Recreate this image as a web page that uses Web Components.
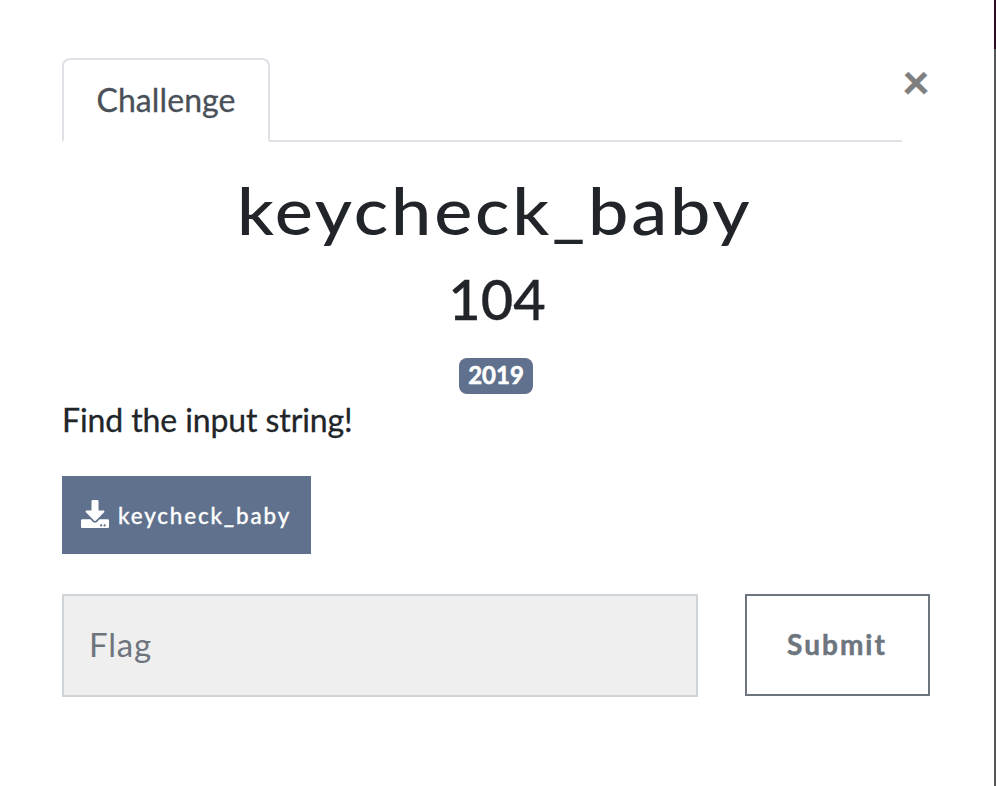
<!DOCTYPE html>
<html lang="en">
<head>
<meta charset="utf-8">
<title>Challenge</title>
<style>
body { margin: 0; background: #fff; color: #212529; font-family: Lato, "Liberation Sans", sans-serif; -webkit-text-stroke: .3px currentColor; }
</style>
</head>
<body>
<challenge-modal>
  <challenge-tab slot="tab">Challenge</challenge-tab>
  <challenge-heading slot="head" points="104">keycheck_baby</challenge-heading>
  <challenge-tag slot="head">2019</challenge-tag>
  <span slot="description">Find the input string!</span>
  <file-button slot="files">keycheck_baby</file-button>
  <flag-form slot="form" placeholder="Flag" action="Submit"></flag-form>
</challenge-modal>
<script>
function define(name, markup, init) {
  const template = document.createElement('template');
  template.innerHTML = markup;
  customElements.define(name, class extends HTMLElement {
    constructor() {
      super();
      this.attachShadow({ mode: 'open' }).append(template.content.cloneNode(true));
    }
    connectedCallback() { if (init) init(this, this.shadowRoot); }
  });
}

define('challenge-modal', `
<style>
  :host { display: grid; grid-template-columns: 1fr 2px; height: 786px; overflow: hidden; }
  main { padding: 58px 64px 0 62px; display: flex; flex-direction: column; }
  .edge { background: linear-gradient(#2d0922 0 49px, #555859 49px 80px, #555 80px); }
  header { display: flex; height: 84px; }
  nav { width: 840px; flex: none; box-sizing: border-box; border-bottom: 2px solid #dee2e6; display: flex; }
  button { all: unset; width: 28px; margin-top: -1px; font-size: 48px; font-weight: 900; line-height: 48px; color: #7f7f7f; display: flex; justify-content: center; }
  .head { display: flex; flex-direction: column; align-items: center; width: 868px; height: 252px; }
  .description { box-sizing: border-box; font-size: 32px; line-height: 48px; padding-top: 2px; height: 82px; letter-spacing: -.1px; }
  .files { height: 118px; display: flex; align-items: flex-start; }
</style>
<main>
  <header><nav><slot name="tab"></slot></nav><button aria-label="Close">×</button></header>
  <div class="head"><slot name="head"></slot></div>
  <div class="description"><slot name="description"></slot></div>
  <div class="files"><slot name="files"></slot></div>
  <slot name="form"></slot>
</main>
<div class="edge"></div>`);

define('challenge-tab', `
<style>
  :host { display: block; box-sizing: border-box; width: 208px; height: 84px; padding: 16px 0; text-align: center;
    font-size: 32px; line-height: 48px; letter-spacing: .1px; color: #495057; background: #fff;
    border: 2px solid #dee2e6; border-bottom-color: #fff; border-radius: 8px 8px 0 0; }
</style><slot></slot>`);

define('challenge-heading', `
<style>
  :host { display: block; text-align: center; padding-top: 29px; height: 187px; font-weight: 500; }
  h2, h3 { margin: 0; font-weight: inherit; }
  h2 { font-size: 65px; line-height: 78px; letter-spacing: 2.6px; transform: translateX(-1.5px) scaleX(1.105); -webkit-text-stroke-width: 0; }
  h3 { font-size: 56px; line-height: 67px; margin-top: 16px; padding-left: 2px; -webkit-text-stroke-width: .3px; }
</style><h2><slot></slot></h2><h3></h3>`,
(el, root) => { root.querySelector('h3').textContent = el.getAttribute('points'); });

define('challenge-tag', `
<style>
  :host { display: block; width: 74px; height: 36px; border-radius: 8px; background: #60718d; color: #fff;
    font-size: 24px; font-weight: 700; line-height: 34px; text-align: center; -webkit-text-stroke-width: .6px; }
</style><slot></slot>`);

define('file-button', `
<style>
  :host { display: flex; align-items: center; box-sizing: border-box; width: 249px; height: 78px; padding-left: 19px; gap: 9px;
    background: #60718d; color: #fff; font-size: 22.4px; line-height: 34px; font-weight: 500; letter-spacing: 1.85px; }
  svg { width: 28px; height: 28px; flex: none; margin-top: -3px; }
  span { white-space: nowrap; padding-top: 2px; }
</style>
<svg viewBox="0 0 512 512" fill="currentColor"><path d="M216 0h80c13.300 0 24 10.700 24 24v168h87.700c17.800 0 26.700 21.500 14.100 34.100L269.700 378.300c-7.500 7.500-19.800 7.500-27.300 0L90.100 226.100c-12.600-12.600-3.700-34.100 14.100-34.100H192V24c0-13.300 10.700-24 24-24zm296 376v112c0 13.300-10.700 24-24 24H24c-13.300 0-24-10.700-24-24V376c0-13.300 10.700-24 24-24h146.700l49 49c20.100 20.100 52.500 20.100 72.600 0l49-49H488c13.300 0 24 10.700 24 24zm-124 88c0-11-9-20-20-20s-20 9-20 20 9 20 20 20 20-9 20-20zm64 0c0-11-9-20-20-20s-20 9-20 20 9 20 20 20 20-9 20-20z"/></svg>
<span><slot></slot></span>`);

define('flag-form', `
<style>
  :host { display: flex; justify-content: space-between; width: 868px; }
  input { box-sizing: border-box; width: 636px; height: 103px; margin: 0; padding: 0 25px 4px; border: 2px solid #ced4d8; border-radius: 0;
    background: #efefef; font: 400 33px Lato, sans-serif; letter-spacing: .8px; color: #6e757e; outline: none; -webkit-text-stroke-width: 0; }
  input::placeholder { color: #6e757e; opacity: 1; }
  button { box-sizing: border-box; width: 185px; height: 102px; margin: 0; padding: 0 1px 2px 0; border: 2px solid #6d757e; background: #fff;
    font: 700 28px Lato, sans-serif; letter-spacing: 2px; color: #6d757e; -webkit-text-stroke-width: .5px; }
</style>
<input><button></button>`,
(el, root) => {
  root.querySelector('input').placeholder = el.getAttribute('placeholder');
  root.querySelector('button').textContent = el.getAttribute('action');
});
</script>
</body>
</html>
